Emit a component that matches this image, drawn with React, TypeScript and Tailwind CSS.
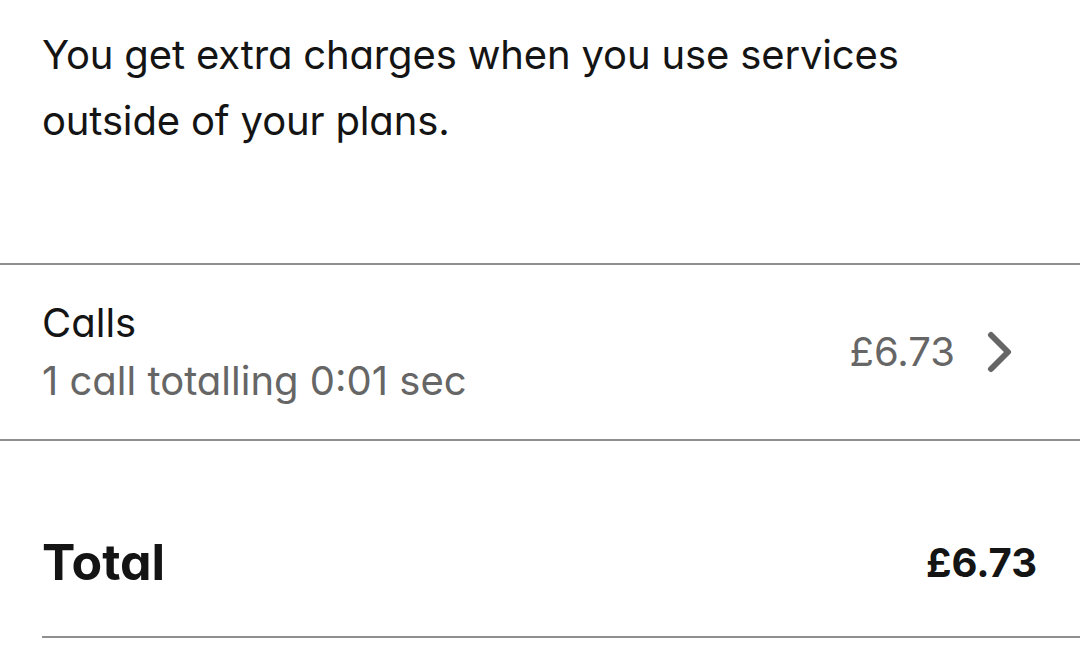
import React from "react";

export default function App() {
  return (
    <div className="w-[1080px] h-[665px] bg-white overflow-hidden font-['Inter',sans-serif] text-[#141414] [font-feature-settings:'cv11']">
      <p className="pl-[42px] pt-[22px] text-[40px] leading-[66px] tracking-[-0.15px]">
        You get extra charges when you use services
        <br />
        outside of your plans.
      </p>
      <div className="mt-[109px] h-[178px] border-y-2 border-[#8f8f8f] flex items-center justify-between pl-[42px] pr-[67px]">
        <div className="flex flex-col text-[40px] leading-[58px]">
          <span className="text-[#141414]">Calls</span>
          <span className="text-[#666666]">1 call totalling 0:01 sec</span>
        </div>
        <div className="flex items-center gap-[32px]">
          <span className="text-[40px] text-[#666666]">£6.73</span>
          <svg width="26" height="42" viewBox="0 0 26 42" fill="none">
            <polyline
              points="4,4 21,21 4,38"
              stroke="#666666"
              strokeWidth="6"
              strokeLinecap="round"
              strokeLinejoin="round"
            />
          </svg>
        </div>
      </div>
      <div className="ml-[42px] h-[197px] border-b-2 border-[#8f8f8f] flex items-center justify-between pt-[48px] pr-[43px]">
        <span className="text-[50px] font-bold">Total</span>
        <span className="text-[40px] font-bold">£6.73</span>
      </div>
    </div>
  );
}
